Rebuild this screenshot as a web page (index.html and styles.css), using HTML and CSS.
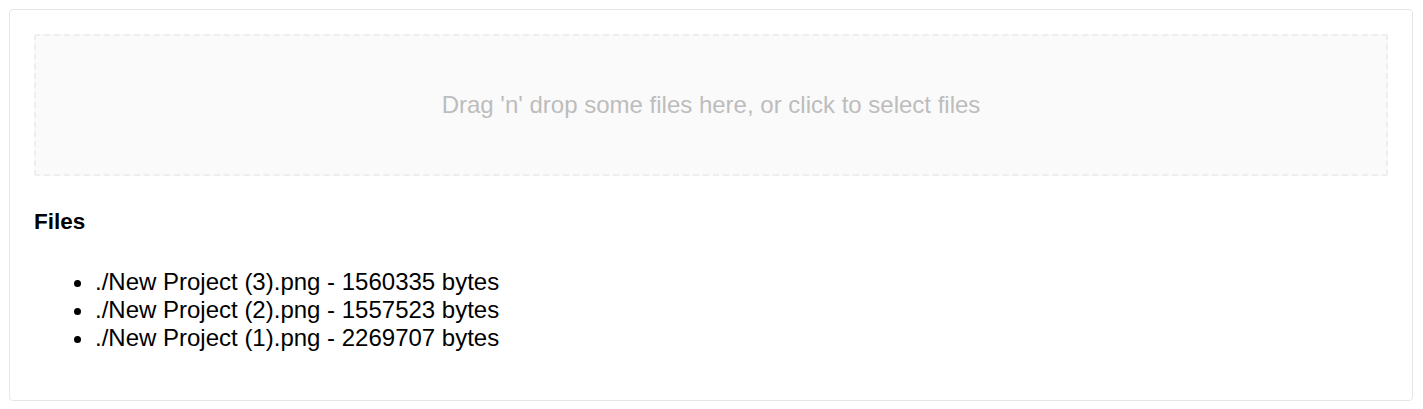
FILE: index.html
```html
<!DOCTYPE html>
<html lang="en">
<head>
    <meta charset="UTF-8">
    <title>Dropzone</title>
    <link rel="stylesheet" href="styles.css">
</head>
<body>
    <section class="container">
        <div class="dropzone">
            <p>Drag 'n' drop some files here, or click to select files</p>
        </div>
        <aside class="files">
            <h4>Files</h4>
            <ul>
                <li>./New Project (3).png - 1560335 bytes</li>
                <li>./New Project (2).png - 1557523 bytes</li>
                <li>./New Project (1).png - 2269707 bytes</li>
            </ul>
        </aside>
    </section>
</body>
</html>
```

FILE: styles.css
```css
body {
    font-family: "Liberation Sans", Arial, sans-serif;
    margin: 9px 10px 9px 9px;
    color: #000;
    background: #fff;
}

.container {
    border: 1px solid #e6e6e6;
    border-radius: 4px;
    padding: 24px 24px 48px;
}

.dropzone {
    height: 138px;
    display: flex;
    align-items: center;
    justify-content: center;
    border: 2px dashed #eeeeee;
    border-radius: 2px;
    background-color: #fafafa;
    color: #bdbdbd;
}

.dropzone p {
    margin: 0;
    font-size: 24px;
}

.files h4 {
    font-size: 22.5px;
    line-height: 26px;
    margin: 33px 0 0;
}

.files ul {
    margin: 33px 0 0;
    padding-left: 61px;
    font-size: 24px;
    line-height: 28px;
}
```
